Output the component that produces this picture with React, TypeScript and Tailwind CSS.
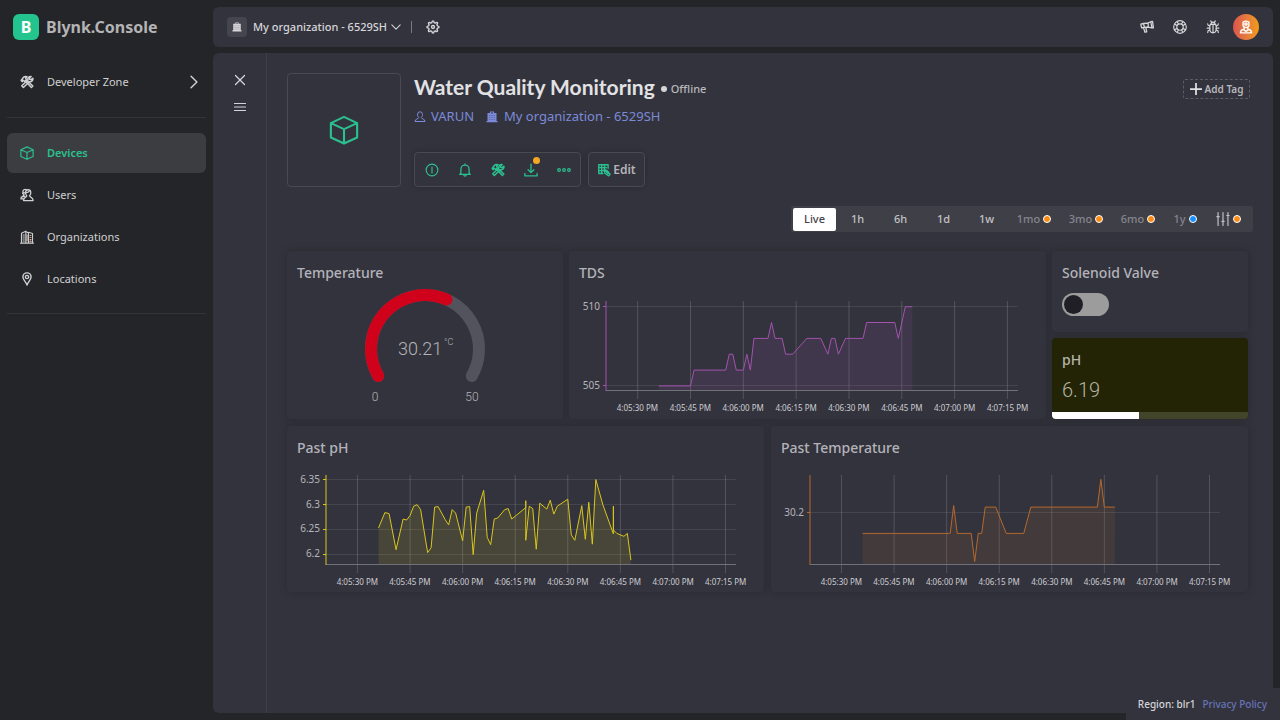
import type { ReactNode } from "react";

type Point = [number, number];

/* ---------- icons ---------- */

type IconProps = { className?: string; children?: ReactNode; width?: number };

function Icon({ className = "size-4", children, width = 1.5 }: IconProps) {
  return (
    <svg
      viewBox="0 0 24 24"
      className={className}
      fill="none"
      stroke="currentColor"
      strokeWidth={width}
      strokeLinecap="round"
      strokeLinejoin="round"
      aria-hidden="true"
    >
      {children}
    </svg>
  );
}

const CubeIcon = ({ className, width = 2 }: { className?: string; width?: number }) => (
  <Icon className={className} width={width}>
    <path d="M12 1.5 22.5 6.5V18L12 22.8 1.5 18V6.5ZM1.5 6.5 12 11.3 22.5 6.5M12 11.3V22.8" />
  </Icon>
);

const ToolsIcon = ({ className }: { className?: string }) => (
  <Icon className={className} width={2.6}>
    <path d="M2 9.5 5.5 4.5Q8 2 12 3L9.5 5.5 11 8 8 11 5.5 9 4 11.5Z" />
    <path d="M9.5 10.5 19.5 21.5 22 19 11.5 8.5" />
    <path d="M19 2.5A5 5 0 0 0 13.5 8.5L3 18.5 5.8 21.5 16 11.5A5 5 0 0 0 22 5.5L19 8 16.5 7.5 16.5 5Z" />
  </Icon>
);

const UsersIcon = ({ className }: { className?: string }) => (
  <Icon className={className} width={2.2}>
    <path d="M9.5 8a4.500 5 0 1 1 9 0c0 2.500-1 4-2.200 5.500.5 2.500 6.200 2 6.200 8H6c0-6 5.200-5.500 5.700-8C10.500 12 9.500 10.500 9.500 8Z" />
    <path d="M11 3C8 1 4.500 3.500 5 7c.2 2 .5 3.500 2 5-1 2-5 2-5.500 6.500H6M4.500 9l5-1M10 8c3 0 5-1 6-2.500M2 15.500l6-1" />
  </Icon>
);

const BuildingIcon = ({ className }: { className?: string }) => (
  <Icon className={className} width={1.8}>
    <path d="M2.500 22V5.500L10 2V22M10 2.500 14.500 5V22M14.500 4 21.500 6V22M1 22.500H23" />
    <path d="M5 8.500h2.500M5 12h2.500M5 15.500h2.500M5 19h2.500M12 8v11" />
    <path d="M17 9.500h2M17 13h2M17 16.500h2M17 19.500h2" stroke="#d9a79a" />
  </Icon>
);

const BriefBuildingIcon = ({ className }: { className?: string }) => (
  <svg viewBox="0 0 24 24" className={className} fill="currentColor" aria-hidden="true">
    <path d="M8 1h8v3h5v16h2v2.500H1V20h2V4h5ZM10.500 2.500V5h3V2.500Z" fillRule="evenodd" />
    <path
      d="M7.500 8v11M12 8v11M16.500 8v11"
      stroke="#33333d"
      strokeOpacity=".6"
      strokeWidth="1.600"
      strokeDasharray="2 2"
    />
  </svg>
);

const PinIcon = ({ className }: { className?: string }) => (
  <Icon className={className} width={2.4}>
    <path d="M12 22.500C10.500 17.500 5 13 5 8.500a7 7 0 0 1 14 0C19 13 13.500 17.500 12 22.500Z" />
    <circle cx="12" cy="8.500" r="2.800" />
  </Icon>
);

const GearIcon = ({ className }: { className?: string }) => (
  <Icon className={className} width={2.4}>
    <path d="M10 4.500Q10.500 1.500 12 1.500T14 4.500L15.900 5.300Q18.400 3.500 19.500 4.500T18.700 8.100L19.500 10Q22.500 10.500 22.500 12T19.500 14L18.700 15.900Q20.500 18.400 19.500 19.500T15.900 18.700L14 19.500Q13.500 22.500 12 22.500T10 19.500L8.100 18.700Q5.600 20.500 4.500 19.500T5.300 15.900L4.500 14Q1.500 13.500 1.500 12T4.500 10L5.300 8.100Q3.500 5.600 4.500 4.500T8.100 5.300Z" />
    <circle cx="12" cy="12" r="2.500" />
  </Icon>
);

const MegaphoneIcon = ({ className }: { className?: string }) => (
  <Icon className={className} width={2.2}>
    <path d="M1.500 7 6 6 7.500 12.500 3 13.500Q1.500 11 1.500 7ZM6 6Q14 6 18.500 3L20.500 13.500Q14.500 12 7.500 12.500M18.500 3 21.500 2.500 23 13.500 20.500 13.500M6 13 8.500 21 11.500 20.300 10 12.500M14 6v5.500" />
  </Icon>
);

const LifeRingIcon = ({ className }: { className?: string }) => (
  <Icon className={className} width={2}>
    <circle cx="12" cy="12" r="10.800" />
    <circle cx="12" cy="12" r="5.500" />
    <path d="m3.500 7.500 3.500 1.800M7.500 3.500l1.800 3.500M20.500 7.500 17 9.300M16.500 3.500l-1.800 3.500M3.500 16.500 7 14.700M7.500 20.500 9.300 17M20.500 16.500 17 14.700M16.500 20.500 14.700 17" />
  </Icon>
);

const BugIcon = ({ className }: { className?: string }) => (
  <Icon className={className} width={2}>
    <path d="M6.500 10Q6.500 7 12 7t5.500 3v6a5.500 6 0 0 1-11 0ZM12 7v15M8.500 7.200Q8.500 3.500 12 3.500t3.500 3.700M9.500 3.500 8 1.500M14.500 3.500 16 1.500" />
    <path d="M6.500 10 3.500 9 3 6.500M6.500 14H2M6.500 17 3.500 18.500 3 21.500M17.500 10l3-1 .5-2.500M17.500 14H22M17.500 17l3 1.500.5 3" />
  </Icon>
);

const AvatarIcon = ({ className }: { className?: string }) => (
  <Icon className={className} width={2.4}>
    <path d="M7 3.500Q12 .5 17 3.500V10Q15.500 13 12 13T7 10Z" />
    <circle cx="12" cy="7" r="2" />
    <path d="M9 13v2.500Q2.500 17 2.500 22h19q0-5-6.500-6.500V13M8 17l4 2.500 4-2.500" />
  </Icon>
);

const PersonIcon = ({ className }: { className?: string }) => (
  <Icon className={className} width={2}>
    <path d="M7 7a5 5.500 0 0 1 10 0c0 3-1 4.500-2.500 6 0 3.500 7.500 2 7.500 8H2c0-6 7.500-4.500 7.500-8C8 11.500 7 10 7 7Z" />
  </Icon>
);

const InfoIcon = () => (
  <Icon className="size-3.5" width={2}>
    <circle cx="12" cy="12" r="10" />
    <path d="M12 7v10" />
  </Icon>
);

const BellIcon = () => (
  <Icon className="size-3.5" width={2.2}>
    <path d="M12 1.500V3.500M5 18V10.500a7 7 0 0 1 14 0V18l2 1.500H3ZM10 20.500a2 2 0 0 0 4 0" />
  </Icon>
);

const DownloadIcon = () => (
  <Icon className="size-3.5" width={2.2}>
    <path d="M12 2v14M7 11.500l5 5 5-5M1.500 18v4h21v-4" />
  </Icon>
);

const DotsIcon = () => (
  <Icon className="size-3.5" width={2}>
    <circle cx="3.500" cy="12" r="2.300" />
    <circle cx="12" cy="12" r="2.300" />
    <circle cx="20.500" cy="12" r="2.300" />
  </Icon>
);

const EditIcon = () => (
  <Icon className="size-3.5 text-[#2bc08f]" width={2.4}>
    <path d="M3 3h16v6M3 3v15h7M3 8h13M3 13h8M8 3v15M13 3v7" />
    <path d="m12 11 6 2.500 4.500 6-2.500 2.500-6.500-4.500ZM13 12l6 6" />
  </Icon>
);

const SlidersIcon = () => (
  <Icon className="size-3.5" width={2}>
    <path d="M3.500 1v22M12 1v22M20.500 1v22M1.500 8h4M10 16h4M18.500 6h4" />
  </Icon>
);

/* ---------- charts ---------- */

type ChartProps = {
  color: string;
  data: Point[];
  min: number;
  max: number;
  ticks: number[];
  narrowAxis?: boolean;
};

const START = -9;
const SPAN = 117;
const PLOT = 90;
const TIMES = [
  "4:05:30 PM",
  "4:05:45 PM",
  "4:06:00 PM",
  "4:06:15 PM",
  "4:06:30 PM",
  "4:06:45 PM",
  "4:07:00 PM",
  "4:07:15 PM",
];

function Chart({ color, data, min, max, ticks, narrowAxis = false }: ChartProps) {
  const axis = narrowAxis ? 37 : 39;
  const x = (t: number) => ((t - START) / SPAN) * 1000;
  const y = (v: number) => ((max - v) / (max - min)) * PLOT;
  const line = data.map(([t, v]) => `${x(t).toFixed(1)},${y(v).toFixed(1)}`).join(" ");
  const area = `${x(data[0][0])},${PLOT} ${line} ${x(data[data.length - 1][0])},${PLOT}`;
  return (
    <div className="pr-3">
      <div className="flex pr-4">
        <svg
          className={
            narrowAxis
              ? "h-[98px] w-[37px] shrink-0 overflow-visible"
              : "h-[98px] w-[39px] shrink-0 overflow-visible"
          }
          aria-hidden="true"
        >
          {ticks.map((v) => (
            <g key={v}>
              <text x={axis - 6} y={y(v) + 3} textAnchor="end" fontSize="10" fill="#b5b5bb">
                {v}
              </text>
              <path d={`M${axis - 3} ${Math.floor(y(v)) + 0.5}h3`} stroke={color} strokeWidth="1" />
            </g>
          ))}
        </svg>
        <svg
          viewBox="0 0 1000 98"
          preserveAspectRatio="none"
          className="h-[98px] min-w-0 flex-1 overflow-visible"
          fill="none"
          aria-hidden="true"
        >
          <g stroke="#ffffff" strokeOpacity=".16" strokeWidth="1">
            {TIMES.map((label, i) => (
              <path key={label} d={`M${x(i * 15)} 0V98`} vectorEffect="non-scaling-stroke" />
            ))}
          </g>
          <g stroke="#ffffff" strokeOpacity=".09" strokeWidth="1">
            {ticks.map((v) => (
              <path
                key={v}
                d={`M0 ${Math.floor(y(v)) + 0.5}H1000`}
                vectorEffect="non-scaling-stroke"
              />
            ))}
          </g>
          <polygon points={area} fill={color} fillOpacity=".13" />
          <path d="M0 89.500H1000" stroke="#71717a" vectorEffect="non-scaling-stroke" />
          <path d="M0 0V90" stroke={color} vectorEffect="non-scaling-stroke" />
          <polyline points={line} stroke={color} vectorEffect="non-scaling-stroke" />
        </svg>
      </div>
      <div
        className={
          narrowAxis
            ? "mt-[3px] grid grid-cols-8 pl-[42px] text-[8px] leading-3 text-[#cdcdd2]"
            : "mt-[3px] grid grid-cols-8 pl-[44px] text-[8px] leading-3 text-[#cdcdd2]"
        }
      >
        {TIMES.map((label) => (
          <span key={label} className="flex justify-center whitespace-nowrap">
            {label}
          </span>
        ))}
      </div>
    </div>
  );
}

const TDS: Point[] = [
  [6, 505], [15, 505], [16, 506], [25, 506], [26, 507], [27, 507], [28, 506], [30, 506],
  [31, 507], [32, 506], [33, 508], [37, 508], [38, 509], [39, 508], [41, 508], [42, 507],
  [44, 507], [48, 508], [52, 508], [54, 507], [55, 508], [56, 508], [57, 507], [59, 508],
  [64, 508], [65, 509], [73, 509], [74, 508], [76, 510], [78, 510],
];

const PH: Point[] = [
  [6, 6.253], [7.8, 6.284], [9, 6.282], [11, 6.209], [13, 6.271], [14, 6.269], [15, 6.278],
  [16, 6.297], [17, 6.3], [18, 6.29], [20, 6.203], [21, 6.213], [22, 6.295], [23, 6.296],
  [25, 6.27], [26, 6.259], [27, 6.29], [28, 6.283], [30, 6.227], [31, 6.295], [32, 6.296],
  [33, 6.199], [34, 6.283], [36, 6.329], [37, 6.234], [38, 6.219], [39, 6.271], [40, 6.273],
  [42, 6.29], [43, 6.292], [44, 6.271], [48, 6.294], [48, 6.308], [48, 6.228], [49, 6.297],
  [50, 6.292], [51, 6.21], [52, 6.303], [54, 6.291], [55, 6.309], [56, 6.281], [57, 6.297],
  [60, 6.311], [61, 6.239], [62, 6.228], [64, 6.298], [65, 6.23], [66, 6.305], [67, 6.22],
  [68, 6.351], [70, 6.3], [73, 6.241], [73, 6.297], [73, 6.249], [74, 6.242], [76, 6.236],
  [77, 6.242], [78, 6.188],
];

const TEMPERATURE: Point[] = [
  [6, 30.192], [31, 30.192], [32, 30.2027], [33, 30.192], [37, 30.192], [38, 30.1812],
  [39, 30.192], [40, 30.192], [41, 30.2021], [44, 30.2021], [47, 30.192], [52, 30.192],
  [54, 30.2021], [73, 30.2021], [74, 30.2127], [75, 30.2021], [78, 30.2021],
];

function Gauge() {
  return (
    <svg
      viewBox="0 0 140 128"
      className="mx-auto -mt-[3px] h-[128px] w-[140px]"
      role="img"
      aria-label="Temperature gauge"
    >
      <g fill="none" strokeWidth="12" strokeLinecap="round">
        <path d="M23.200 96A54 54 0 1 1 116.800 96" stroke="#53535d" />
        <path d="M23.200 96A54 54 0 0 1 91.500 19.500" stroke="#d0021b" />
      </g>
      <g fill="#b3b3b9" fontFamily="Roboto, sans-serif" fontWeight="300">
        <text x="43" y="75" fontSize="18">30.21</text>
        <text x="89" y="65" fontSize="9">°C</text>
        <text x="20" y="121" textAnchor="middle" fontSize="12">0</text>
        <text x="117" y="121" textAnchor="middle" fontSize="12">50</text>
      </g>
    </svg>
  );
}

/* ---------- layout parts ---------- */

function Card({ title, children }: { title: string; children: ReactNode }) {
  return (
    <section className="min-w-0 rounded bg-[#33333d] pt-3 pb-1 shadow-[0_0_8px_rgba(0,0,0,0.22)]">
      <h2 className="px-2.5 text-sm leading-5 font-medium text-[#b3b3b9]">{title}</h2>
      {children}
    </section>
  );
}

const NAV = [
  { label: "Devices", icon: <CubeIcon className="size-3.5" />, active: true },
  { label: "Users", icon: <UsersIcon className="size-3.5" />, active: false },
  { label: "Organizations", icon: <BuildingIcon className="size-3.5" />, active: false },
  { label: "Locations", icon: <PinIcon className="size-3.5" />, active: false },
];

function Sidebar() {
  return (
    <nav className="flex w-[213px] shrink-0 flex-col px-[7px] text-[11px] text-[#d0d0d2]">
      <a href="#home" className="mt-3.5 flex h-[26px] items-center gap-[7px] pl-[6px]">
        <span className="flex size-[26px] items-center justify-center rounded-md bg-[#24c48e] text-base font-bold text-white">
          B
        </span>
        <span className="text-base font-bold text-[#b4b4b6]">Blynk.Console</span>
      </a>
      <a href="#developer" className="mt-[22px] flex h-10 items-center gap-[13px] pr-[5px] pl-[13px]">
        <ToolsIcon className="size-3.5" />
        <span className="flex-1">Developer Zone</span>
        <Icon className="size-3.5" width={2.5}>
          <path d="m7 2 10 10L7 22" />
        </Icon>
      </a>
      <div className="mt-[15px] mb-[15px] border-t border-[#33343a]" />
      <ul className="flex flex-col gap-0.5">
        {NAV.map((item) => (
          <li key={item.label}>
            <a
              href={`#${item.label.toLowerCase()}`}
              className={
                item.active
                  ? "flex h-10 items-center gap-[13px] rounded-md bg-[#3c3d40] pl-[13px] font-semibold text-[#2bc08f]"
                  : "flex h-10 items-center gap-[13px] rounded-md pl-[13px]"
              }
            >
              {item.icon}
              {item.label}
            </a>
          </li>
        ))}
      </ul>
      <div className="mt-3.5 border-t border-[#33343a]" />
    </nav>
  );
}

function TopBar() {
  return (
    <header className="flex h-10 shrink-0 items-center rounded-md bg-[#33333d] pr-3.5 pl-3.5 text-[#d6d6da]">
      <span className="flex size-5 items-center justify-center rounded bg-[#44454d]">
        <BriefBuildingIcon className="size-2.5" />
      </span>
      <button className="ml-1.5 flex items-center gap-1 text-[11px] font-medium whitespace-nowrap">
        My organization - 6529SH
        <Icon className="size-2.5" width={2.5}>
          <path d="m2 7 10 10L22 7" />
        </Icon>
      </button>
      <span className="ml-2.5 h-3 w-px bg-[#7a7a80]" />
      <button aria-label="Settings" className="ml-3.5">
        <GearIcon className="size-3.5" />
      </button>
      <div className="ml-auto flex items-center gap-[19px]">
        <button aria-label="Announcements"><MegaphoneIcon className="size-3.5" /></button>
        <button aria-label="Help"><LifeRingIcon className="size-3.5" /></button>
        <button aria-label="Report a bug"><BugIcon className="size-3.5" /></button>
        <button
          aria-label="Account"
          className="-ml-[6px] flex size-[26px] items-center justify-center rounded-full bg-linear-to-r from-[#d9544f] to-[#f09c0c] text-white"
        >
          <AvatarIcon className="size-3.5" />
        </button>
      </div>
    </header>
  );
}

const ACTIONS = [
  { label: "Info", icon: <InfoIcon />, badge: false },
  { label: "Notifications", icon: <BellIcon />, badge: false },
  { label: "Tools", icon: <ToolsIcon className="size-3.5" />, badge: false },
  { label: "Firmware", icon: <DownloadIcon />, badge: true },
  { label: "More", icon: <DotsIcon />, badge: false },
];

function DeviceHeader() {
  return (
    <div className="flex">
      <div className="flex size-[114px] shrink-0 items-center justify-center rounded border border-[#494952] text-[#2bc08f]">
        <CubeIcon className="size-[30px]" width={1.7} />
      </div>
      <div className="ml-[13px] flex min-w-0 flex-1 flex-col">
        <div className="flex h-7 items-center gap-1.5">
          <h1 className="font-['Lato'] text-[21px] font-bold whitespace-nowrap text-[#e2e2e4]">
            Water Quality Monitoring
          </h1>
          <span className="flex items-center gap-1 pt-1 text-[11px] font-medium text-[#b8b8bc]">
            <span className="size-1.5 rounded-full bg-[#d6d6da]" />
            Offline
          </span>
        </div>
        <div className="mt-1.5 flex h-5 items-center text-[13px] whitespace-nowrap text-[#7b8ad9]">
          <PersonIcon className="size-3" />
          <span className="ml-[5px]">VARUN</span>
          <BriefBuildingIcon className="ml-3 size-3" />
          <a href="#organization" className="ml-1.5">My organization - 6529SH</a>
        </div>
        <div className="mt-auto flex gap-[7px]">
          <div className="flex h-[35px] items-center rounded border border-[#494952] text-[#2bc08f] shadow-[0_0_6px_rgba(0,0,0,0.2)]">
            {ACTIONS.map((action) => (
              <button
                key={action.label}
                aria-label={action.label}
                className="relative flex h-full w-[33px] items-center justify-center"
              >
                {action.icon}
                {action.badge && (
                  <span className="absolute top-1 right-[7px] size-[7px] rounded-full bg-[#f5a623]" />
                )}
              </button>
            ))}
          </div>
          <button className="flex h-[35px] w-[57px] items-center justify-center gap-0.5 rounded border border-[#494952] text-xs font-semibold text-[#b3b3b9] shadow-[0_0_6px_rgba(0,0,0,0.2)]">
            <EditIcon />
            Edit
          </button>
        </div>
      </div>
      <button className="mt-1.5 mr-[3px] flex h-5 w-[67px] shrink-0 items-center justify-center gap-[3px] rounded-xs border border-dashed border-[#5c5c65] text-[10px] font-semibold whitespace-nowrap text-[#b8b8bc]">
        <Icon className="size-3 text-[#e2e2e4]" width={3.5}>
          <path d="M12 1v22M1 12h22" />
        </Icon>
        Add Tag
      </button>
    </div>
  );
}

const LOCKED = ["1mo", "3mo", "6mo"];

const dotOrange = "size-2 rounded-full border border-white bg-[#fa8c16]";
const dotBlue = "size-2 rounded-full border border-white bg-[#1890ff]";

function RangePicker() {
  return (
    <div className="mt-[19px] flex h-[26px] items-center self-end rounded-xs bg-[#3f3f48] pr-[3px] pl-0.5 text-[11px] font-medium text-[#c2c2c6]">
      <button className="h-[23px] w-[43px] rounded-xs bg-white text-[#44444c]">Live</button>
      {["1h", "6h", "1d", "1w"].map((label) => (
        <button key={label} className="h-[23px] w-[43px]">{label}</button>
      ))}
      {LOCKED.map((label) => (
        <button
          key={label}
          className="flex h-[23px] w-[52px] items-center justify-center gap-[3px] text-[#85858d]"
        >
          {label}
          <span className={dotOrange} />
        </button>
      ))}
      <button className="flex h-[23px] w-[42px] items-center justify-center gap-[3px] text-[#85858d]">
        1y
        <span className={dotBlue} />
      </button>
      <button aria-label="Custom range" className="flex h-[23px] w-[44px] items-center justify-center gap-[3px]">
        <SlidersIcon />
        <span className={dotOrange} />
      </button>
    </div>
  );
}

function Dashboard() {
  return (
    <div className="mt-[19px] mr-[5px] flex flex-col gap-[7px]">
      <div className="grid grid-cols-[276fr_477fr_196fr] gap-1.5">
        <Card title="Temperature">
          <Gauge />
        </Card>
        <Card title="TDS">
          <div className="mt-[18px]">
            <Chart color="#a352ae" data={TDS} min={504.68} max={510.36} ticks={[510, 505]} narrowAxis />
          </div>
        </Card>
        <div className="flex min-w-0 flex-col gap-1.5">
          <section className="flex h-[81px] flex-col rounded bg-[#33333d] px-2.5 pt-3 shadow-[0_0_8px_rgba(0,0,0,0.22)]">
            <label htmlFor="valve" className="text-sm leading-5 font-medium whitespace-nowrap text-[#b3b3b9]">
              Solenoid Valve
            </label>
            <input
              id="valve"
              type="checkbox"
              role="switch"
              className="mt-2.5 h-[23px] w-[47px] appearance-none rounded-full bg-[#9c9c9c] p-0.5 before:block before:size-[19px] before:rounded-full before:bg-[#201f27] before:content-['']"
            />
          </section>
          <section className="flex h-[81px] flex-col overflow-hidden rounded bg-[#232406] pt-3 shadow-[0_0_8px_rgba(0,0,0,0.22)]">
            <h2 className="px-2.5 text-sm leading-5 font-medium text-[#b5b5aa]">pH</h2>
            <p className="mt-1.5 px-2.5 font-['Roboto',sans-serif] text-xl leading-7 font-light text-[#b4b5a4]">
              6.19
            </p>
            <div className="mt-auto h-[7px] bg-[#43452b]">
              <div className="h-full bg-white" style={{ width: `${(6.19 / 14) * 100}%` }} />
            </div>
          </section>
        </div>
      </div>
      <div className="grid grid-cols-2 gap-[7px]">
        <Card title="Past pH">
          <div className="mt-[17px]">
            <Chart color="#d9c71c" data={PH} min={6.178} max={6.36} ticks={[6.35, 6.3, 6.25, 6.2]} />
          </div>
        </Card>
        <Card title="Past Temperature">
          <div className="mt-[17px]">
            <Chart color="#b5692c" data={TEMPERATURE} min={30.1799} max={30.2144} ticks={[30.2]} />
          </div>
        </Card>
      </div>
    </div>
  );
}

export default function App() {
  return (
    <div className="relative flex min-h-screen bg-[#242528] font-['Noto_Sans',sans-serif]">
      <Sidebar />
      <div className="flex min-w-0 flex-1 flex-col gap-1.5 pt-[7px] pr-[7px] pb-[7px]">
        <TopBar />
        <main className="flex flex-1 rounded-md bg-[#33333d]">
          <div className="flex w-[54px] shrink-0 flex-col items-center gap-[15px] border-r border-[#3f3f49] pt-[21px] text-[#d6d6da]">
            <button aria-label="Close">
              <Icon className="size-3" width={2.5}>
                <path d="M3 3 21 21M21 3 3 21" />
              </Icon>
            </button>
            <button aria-label="Menu">
              <Icon className="size-3" width={2.2}>
                <path d="M1 5h22M1 12h22M1 19h22" />
              </Icon>
            </button>
          </div>
          <div className="flex min-w-0 flex-1 flex-col pt-5 pr-5 pb-8 pl-5">
            <DeviceHeader />
            <RangePicker />
            <Dashboard />
          </div>
        </main>
      </div>
      <footer className="absolute right-0 bottom-0 flex h-8 items-center gap-[7px] rounded-tl bg-[#33333d] pr-[13px] pl-3 text-[10px] font-medium">
        <span className="text-[#d6d6da]">Region: blr1</span>
        <a href="#privacy" className="text-[#6673b8]">Privacy Policy</a>
      </footer>
    </div>
  );
}
